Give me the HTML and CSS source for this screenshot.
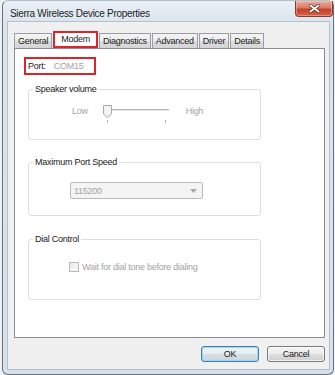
FILE: index.html
```html
<!DOCTYPE html>
<html lang="en">
<head>
    <meta charset="UTF-8">
    <meta name="viewport" content="width=device-width, initial-scale=1.0">
    <title>Sierra Wireless Device Properties</title>
    <link rel="stylesheet" href="styles.css">
</head>
<body>
    <div class="window">
        <div class="titlebar">
            <span class="title">Sierra Wireless Device Properties</span>
            <button class="close" aria-label="Close">
                <svg width="11" height="9" viewBox="0 0 11 9">
                    <path d="M1.5 1.5l8 6M9.5 1.5l-8 6" stroke="#5a2a20" stroke-width="3.4" stroke-linecap="square"/>
                    <path d="M1.5 1.5l8 6M9.5 1.5l-8 6" stroke="#fff" stroke-width="1.8" stroke-linecap="square"/>
                </svg>
            </button>
        </div>

        <div class="client">
            <div class="tabs">
                <span class="tab">General</span>
                <span class="tab active">Modem</span>
                <span class="tab">Diagnostics</span>
                <span class="tab">Advanced</span>
                <span class="tab">Driver</span>
                <span class="tab">Details</span>
            </div>

            <div class="panel">
                <div class="port">
                    <span>Port:</span>
                    <span class="muted">COM15</span>
                </div>

                <fieldset class="group speaker">
                    <legend>Speaker volume</legend>
                    <div class="slider-row">
                        <span class="muted">Low</span>
                        <svg class="slider" width="67" height="20" viewBox="0 0 67 20">
                            <!-- track -->
                            <line x1="9" y1="5.5" x2="66" y2="5.5" stroke="#b4b4b4"/>
                            <line x1="9" y1="6.5" x2="66" y2="6.5" stroke="#e6e6e6"/>
                            <!-- thumb -->
                            <path d="M0.5 1.5h8v8.5l-4 3.5l-4-3.5z" fill="#f3f3f3" stroke="#a9a9a9"/>
                            <!-- ticks -->
                            <line x1="4.5" y1="16" x2="4.5" y2="19" stroke="#b4b4b4"/>
                            <line x1="62.5" y1="16" x2="62.5" y2="19" stroke="#b4b4b4"/>
                        </svg>
                        <span class="muted">High</span>
                    </div>
                </fieldset>

                <fieldset class="group speed">
                    <legend>Maximum Port Speed</legend>
                    <div class="combo">
                        <span>115200</span>
                        <svg width="7" height="4" viewBox="0 0 7 4">
                            <path d="M0 0h7l-3.5 4z" fill="#a8a8a8"/>
                        </svg>
                    </div>
                </fieldset>

                <fieldset class="group dial">
                    <legend>Dial Control</legend>
                    <label class="check">
                        <span class="box"></span>
                        <span class="muted">Wait for dial tone before dialing</span>
                    </label>
                </fieldset>
            </div>

            <div class="actions">
                <button class="btn default">OK</button>
                <button class="btn">Cancel</button>
            </div>
        </div>
    </div>
</body>
</html>
```

FILE: styles.css
```css
body {
    margin: 0;
    padding: 0;
    background: #eef1f4;
    font-family: 'Liberation Sans', Arial, sans-serif;
    font-size: 9px;
    letter-spacing: -0.25px;
    color: #1a1a1a;
}
.window {
    box-sizing: border-box;
    width: 332px;
    height: 375px;
    margin-left: 2px;
    display: flex;
    flex-direction: column;
    background: linear-gradient(180deg, #e9eff5 0px, #dbe5ee 22px, #d6e1eb 100%);
    border: 1px solid #66727e;
    border-top-color: #b3c1ce;
    border-radius: 6px;
}
.titlebar {
    height: 20px;
    display: flex;
    justify-content: space-between;
    align-items: flex-start;
}
.title {
    margin: 7px 0 0 7px;
    font-size: 10px;
    line-height: 11px;
    letter-spacing: -0.3px;
    color: #1e1e1e;
}
.close {
    width: 38px;
    height: 16px;
    margin: 0 0 0 0;
    padding: 0;
    display: flex;
    align-items: center;
    justify-content: center;
    border: 1px solid #8c3a2c;
    border-top: none;
    border-radius: 0 0 4px 4px;
    background: linear-gradient(180deg, #e8ad9f 0%, #db7a66 45%, #c6412b 55%, #d2604a 100%);
    box-shadow: inset 0 0 0 1px rgba(255, 220, 210, 0.4);
}
.client {
    flex: 1;
    display: flex;
    flex-direction: column;
    margin: 0 3px 4px 4px;
    padding: 9px 4px 7px 6px;
    background: #f0f0f0;
    border: 1px solid #b4c1cd;
}
.tabs {
    height: 17px;
    display: flex;
    align-items: flex-end;
    gap: 1px;
}
.tab {
    height: 15px;
    box-sizing: border-box;
    padding: 0 3px;
    line-height: 14px;
    border: 1px solid #9a9da5;
    border-bottom: none;
    background: linear-gradient(180deg, #f4f4f4 0%, #ececec 50%, #dedede 51%, #d4d4d4 100%);
}
.tab.active {
    height: 17px;
    padding: 0 6px;
    line-height: 13px;
    border: 2px solid #d7262c;
    background: #fff;
    position: relative;
    z-index: 1;
}
.panel {
    flex: 1;
    padding-top: 8px;
    background: #fff;
    border: 1px solid #898c95;
}
.muted {
    color: #a3a3a3;
}
.port {
    box-sizing: border-box;
    width: 72px;
    height: 18px;
    margin-left: 9px;
    padding-left: 2px;
    display: flex;
    align-items: center;
    gap: 8px;
    border: 2px solid #d7262c;
}
.group {
    box-sizing: border-box;
    width: 233px;
    min-width: 0;
    margin: 0 0 0 13px;
    padding: 0 0 0 4px;
    border: 1px solid #dcdfe2;
    border-radius: 3px;
}
.group legend {
    padding: 0 2px;
    line-height: 11px;
}
.speaker {
    height: 56px;
    margin-top: 9px;
}
.speed {
    height: 59px;
    margin-top: 17px;
}
.dial {
    height: 66px;
    margin-top: 18px;
}
.slider-row {
    margin: 9px 0 0 39px;
    display: flex;
    align-items: flex-start;
    line-height: 14px;
}
.slider {
    margin: 0 16px 0 15px;
}
.combo {
    box-sizing: border-box;
    width: 133px;
    height: 17px;
    margin: 14px 0 0 37px;
    padding: 0 5px 0 3px;
    display: flex;
    align-items: center;
    justify-content: space-between;
    color: #a3a3a3;
    background: #f4f4f4;
    border: 1px solid #b8bcc0;
    border-radius: 2px;
}
.check {
    margin: 16px 0 0 36px;
    display: flex;
    align-items: center;
    gap: 3px;
    line-height: 12px;
}
.check .box {
    width: 10px;
    height: 10px;
    box-sizing: border-box;
    border: 1px solid #b9b9b9;
    background: linear-gradient(135deg, #ececec, #f8f8f8);
}
.actions {
    margin-top: 8px;
    display: flex;
    justify-content: flex-end;
    gap: 8px;
}
.btn {
    width: 58px;
    height: 16px;
    padding: 0;
    font-family: inherit;
    font-size: 9px;
    letter-spacing: -0.25px;
    color: #1a1a1a;
    border: 1px solid #7a7a7a;
    border-radius: 3px;
    background: linear-gradient(180deg, #f4f4f4 0%, #ebebeb 50%, #dddddd 51%, #d0d0d0 100%);
    box-shadow: inset 0 0 0 1px rgba(255, 255, 255, 0.7);
}
.btn.default {
    border-color: #3c7fb1;
    background: linear-gradient(180deg, #eef4f8 0%, #e5ecf1 50%, #d6dfe6 51%, #cbd5de 100%);
    box-shadow: inset 0 0 0 1px #a6d3ee;
}
```
